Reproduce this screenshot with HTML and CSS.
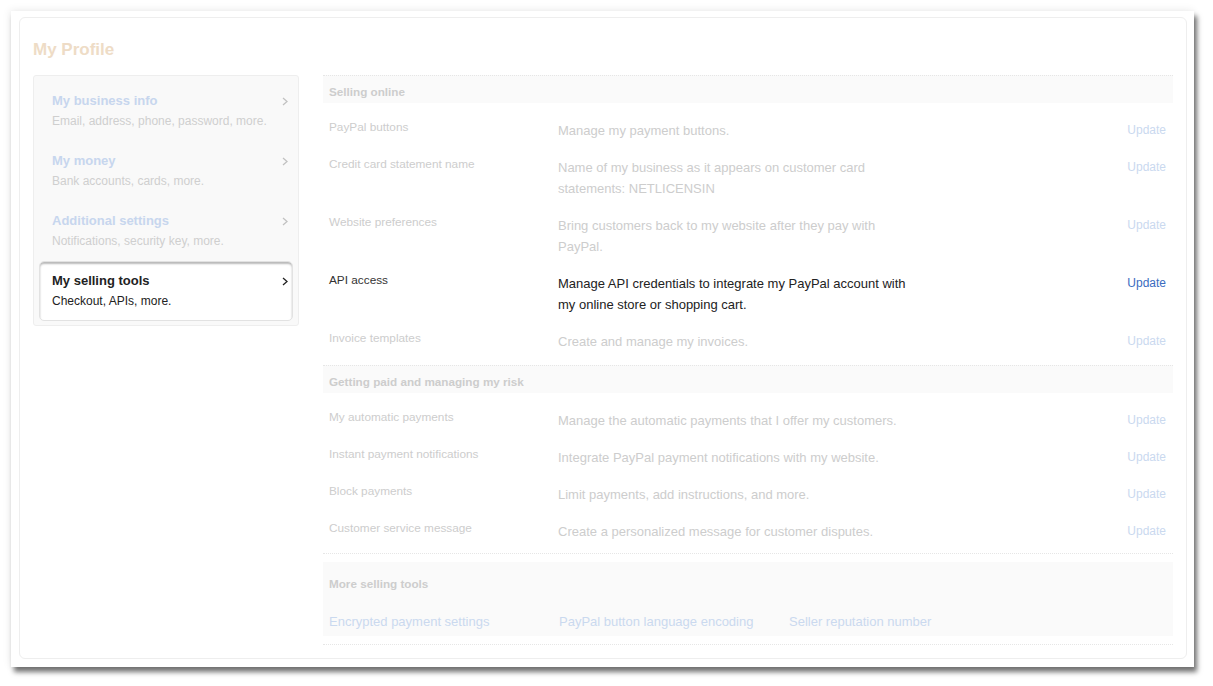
FILE: index.html
```html
<!DOCTYPE html>
<html lang="en">
<head>
  <meta charset="UTF-8">
  <title>My Profile</title>
  <link rel="stylesheet" href="styles.css">
</head>
<body>
  <div class="frame">
    <div class="card">
      <h1 class="title">My Profile</h1>

      <div class="layout">
        <ul class="side">
          <li class="side-item">
            <div class="side-head"><span>My business info</span><svg class="chev" viewBox="0 0 6 9"><polyline points="1,1 5,4.5 1,8"/></svg></div>
            <div class="side-sub">Email, address, phone, password, more.</div>
          </li>
          <li class="side-item">
            <div class="side-head"><span>My money</span><svg class="chev" viewBox="0 0 6 9"><polyline points="1,1 5,4.5 1,8"/></svg></div>
            <div class="side-sub">Bank accounts, cards, more.</div>
          </li>
          <li class="side-item">
            <div class="side-head"><span>Additional settings</span><svg class="chev" viewBox="0 0 6 9"><polyline points="1,1 5,4.5 1,8"/></svg></div>
            <div class="side-sub">Notifications, security key, more.</div>
          </li>
          <li class="side-item active">
            <div class="side-head"><span>My selling tools</span><svg class="chev" viewBox="0 0 6 9"><polyline points="1,1 5,4.5 1,8"/></svg></div>
            <div class="side-sub">Checkout, APIs, more.</div>
          </li>
        </ul>

        <div class="main">
          <div class="section">
            <div class="sec-head">Selling online</div>
            <div class="row"><div class="lbl">PayPal buttons</div><div class="desc">Manage my payment buttons.</div><a class="upd">Update</a></div>
            <div class="row"><div class="lbl">Credit card statement name</div><div class="desc">Name of my business as it appears on customer card statements: NETLICENSIN</div><a class="upd">Update</a></div>
            <div class="row"><div class="lbl">Website preferences</div><div class="desc">Bring customers back to my website after they pay with PayPal.</div><a class="upd">Update</a></div>
            <div class="row on"><div class="lbl">API access</div><div class="desc">Manage API credentials to integrate my PayPal account with my online store or shopping cart.</div><a class="upd">Update</a></div>
            <div class="row"><div class="lbl">Invoice templates</div><div class="desc">Create and manage my invoices.</div><a class="upd">Update</a></div>
          </div>

          <div class="section">
            <div class="sec-head">Getting paid and managing my risk</div>
            <div class="row"><div class="lbl">My automatic payments</div><div class="desc">Manage the automatic payments that I offer my customers.</div><a class="upd">Update</a></div>
            <div class="row"><div class="lbl">Instant payment notifications</div><div class="desc">Integrate PayPal payment notifications with my website.</div><a class="upd">Update</a></div>
            <div class="row"><div class="lbl">Block payments</div><div class="desc">Limit payments, add instructions, and more.</div><a class="upd">Update</a></div>
            <div class="row"><div class="lbl">Customer service message</div><div class="desc">Create a personalized message for customer disputes.</div><a class="upd">Update</a></div>
          </div>

          <div class="more-wrap">
            <div class="more">
              <div class="more-head">More selling tools</div>
              <div class="more-links">
                <a>Encrypted payment settings</a>
                <a>PayPal button language encoding</a>
                <a>Seller reputation number</a>
              </div>
            </div>
          </div>
        </div>
      </div>
    </div>
  </div>
</body>
</html>
```

FILE: styles.css
```css
body { margin: 0; padding: 11px 19px 19px 11px; background: #fff; font-family: "Liberation Sans", Arial, sans-serif; }
.frame { background: #fff; height: 656px; box-sizing: border-box; padding: 6px 7px 8px 8px; box-shadow: 3px 5px 5px rgba(0,0,0,0.55), -1px -1px 8px rgba(0,0,0,0.08); }
.card { height: 642px; box-sizing: border-box; border: 1px solid #eee; border-radius: 6px; padding: 22px 13px 0 13px; }
.title { margin: 0 0 15px; font-size: 17px; line-height: 20px; color: #eedcc6; font-weight: bold; }

.layout { display: flex; gap: 24px; align-items: flex-start; }

.side { list-style: none; margin: 0; padding: 5px 5px 4px; width: 266px; box-sizing: border-box; background: #f9f9f9; border: 1px solid #eee; border-radius: 3px; }
.side-item { height: 60px; box-sizing: border-box; padding: 11px 4px 0 12px; border: 1px solid transparent; border-radius: 5px; }
.side-head { display: flex; justify-content: space-between; align-items: center; font-size: 13px; line-height: 16px; font-weight: bold; color: #c7d6ee; }
.side-sub { margin-top: 4px; font-size: 12px; line-height: 16px; color: #cfcfcf; }
.chev { width: 6px; height: 9px; fill: none; stroke: #c2c2c2; stroke-width: 1.3; }
.side-item.active { background: #fff; border-color: #e2e2e2; box-shadow: inset 0 2px 2px rgba(0,0,0,0.28); padding-top: 11px; }
.side-item.active .side-head { color: #222; }
.side-item.active .side-sub { color: #222; }
.side-item.active .chev { stroke: #222; }

.main { flex: 1; }
.section { margin-bottom: 8px; }
.sec-head { height: 28px; box-sizing: border-box; padding: 9px 0 0 6px; line-height: 14px; font-size: 11.7px; font-weight: bold; color: #cdcdcd; background: #fafafa; border-top: 1px dotted #e6e6e6; margin-bottom: 6px; }
.row { display: grid; grid-template-columns: 229px 355px 1fr auto; padding: 11px 7px 5px 6px; }
.lbl { font-size: 11.8px; line-height: 15px; color: #cdcdcd; }
.desc { font-size: 13px; line-height: 21px; color: #cdcdcd; grid-column: 2; }
.upd { grid-column: 4; font-size: 12px; line-height: 21px; color: #cad9ef; }
.row.on .lbl { color: #333; }
.row.on .desc { color: #222; }
.row.on .upd { color: #3b6cbf; }

.more-wrap { border-top: 1px dotted #e6e6e6; border-bottom: 1px dotted #e6e6e6; padding: 8px 0; margin-top: -2px; }
.more { background: #fafafa; height: 74px; padding: 0 6px; }
.more-head { font-size: 11.7px; font-weight: bold; color: #cdcdcd; line-height: 16px; padding-top: 14px; }
.more-links { display: flex; margin-top: 22px; font-size: 13px; line-height: 16px; color: #cad9ef; }
.more-links a:nth-child(1) { width: 230px; }
.more-links a:nth-child(2) { width: 230px; }
```
